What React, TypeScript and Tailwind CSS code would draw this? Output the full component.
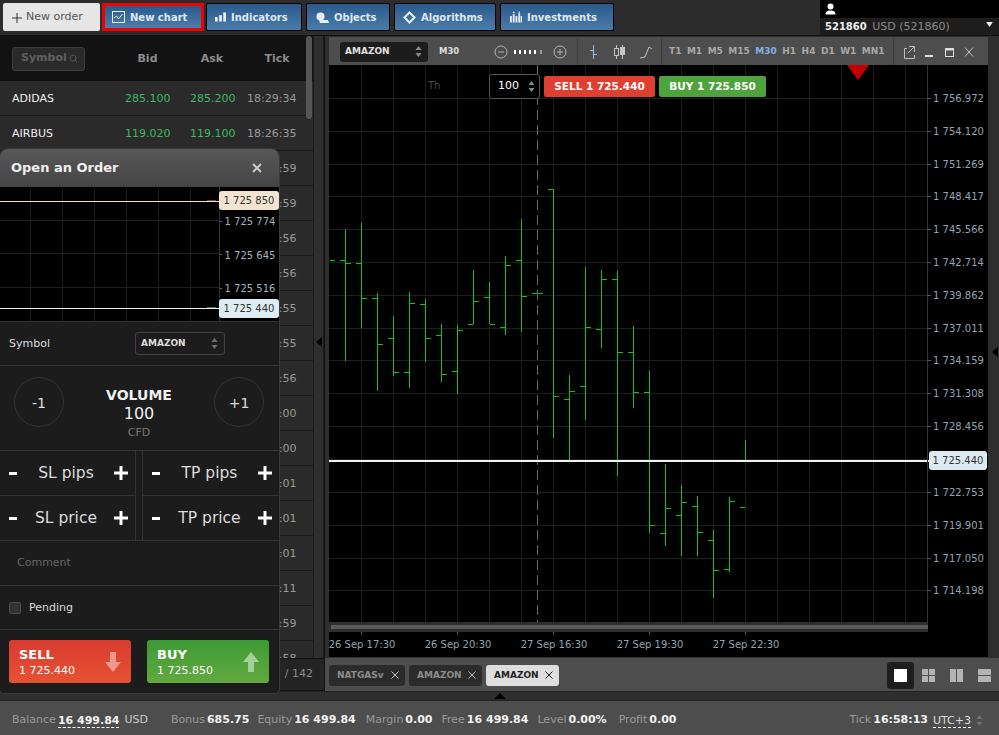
import { Search } from 'lucide-react';
import type { ReactNode } from 'react';

// x, high, low, open, close - in chart pixels
const bars: [number, number, number, number, number][] = [
  [329, 260, 260, 260, 260],
  [345, 229, 361, 260, 263],
  [361, 223, 328, 263, 298],
  [377, 293, 391, 298, 344],
  [393, 316, 376, 338, 372],
  [409, 292, 388, 372, 303],
  [425, 299, 362, 304, 338],
  [441, 324, 382, 335, 374],
  [457, 325, 394, 371, 330],
  [473, 270, 324, 324, 301],
  [489, 282, 324, 297, 324],
  [505, 256, 335, 327, 265],
  [521, 219, 332, 260, 296],
  [537, 293, 293, 293, 293],
  [553, 189, 438, 189, 396],
  [569, 375, 461, 399, 391],
  [585, 267, 420, 386, 327],
  [601, 270, 348, 329, 279],
  [617, 271, 476, 279, 352],
  [633, 326, 408, 352, 392],
  [649, 371, 533, 392, 525],
  [665, 464, 546, 533, 508],
  [681, 485, 556, 515, 502],
  [697, 496, 556, 506, 532],
  [713, 530, 598, 540, 570],
  [729, 497, 572, 569, 501],
  [745, 440, 461, 507, 460],
];

const priceLabels: [number, string][] = [
  [98, '1 756.972'],
  [131, '1 754.120'],
  [164, '1 751.269'],
  [196, '1 748.417'],
  [229, '1 745.566'],
  [262, '1 742.714'],
  [295, '1 739.862'],
  [328, '1 737.011'],
  [360, '1 734.159'],
  [393, '1 731.308'],
  [426, '1 728.456'],
  [492, '1 722.753'],
  [525, '1 719.901'],
  [558, '1 717.050'],
  [590, '1 714.198'],
];

const gridY = [98, 131, 164, 196, 229, 262, 295, 328, 360, 393, 426, 459, 492, 525, 558, 590];
const gridX = Array.from({ length: 18 }, (_, i) => 361 + i * 32);

const timeLabels: [number, string][] = [
  [361, '26 Sep 17:30'],
  [457, '26 Sep 20:30'],
  [553, '27 Sep 16:30'],
  [649, '27 Sep 19:30'],
  [745, '27 Sep 22:30'],
];

const rows = [
  ['ADIDAS', '285.100', '285.200', '18:29:34'],
  ['AIRBUS', '119.020', '119.100', '18:26:35'],
  ['ALCOA', '31.410', '31.440', '18:28:59'],
  ['ALLIANZ', '182.300', '182.400', '18:29:59'],
  ['AMAZON', '725.440', '725.850', '18:29:56'],
  ['APPLE', '171.050', '171.110', '18:29:56'],
  ['AT&T', '38.120', '38.150', '18:29:55'],
  ['AUDCAD', '0.98410', '0.98440', '18:29:55'],
  ['AUDJPY', '88.410', '88.450', '18:29:56'],
  ['AUDUSD', '0.78320', '0.78350', '18:30:00'],
  ['BAIDU', '246.500', '246.900', '18:30:00'],
  ['BARCLAYS', '197.200', '197.400', '18:30:01'],
  ['BAYER', '114.600', '114.800', '18:30:01'],
  ['BMW', '86.210', '86.290', '18:30:01'],
  ['BOEING', '251.300', '251.500', '18:28:11'],
  ['BP', '493.100', '493.400', '18:29:59'],
  ['BRENT', '57.810', '57.850', '18:29:58'],
];

const timeframes = ['T1', 'M1', 'M5', 'M15', 'M30', 'H1', 'H4', 'D1', 'W1', 'MN1'];

function Spinner({ className = 'text-[#8a8a8a]' }: { className?: string }) {
  return (
    <svg width="7" height="13" viewBox="0 0 7 13" className={`shrink-0 ${className}`}>
      <path d="M3.5 1 L6.5 5 H0.5 Z M3.5 12 L6.5 8 H0.5 Z" fill="currentColor" />
    </svg>
  );
}

function TopButton({ icon, label, className }: { icon: ReactNode; label: string; className: string }) {
  return (
    <button className={`flex h-[28px] items-center gap-[5px] rounded-[2px] border border-black bg-gradient-to-b from-[#2a5a8c] to-[#4b7dab] text-[10px] font-bold text-[#dfe8f1] ${className}`}>
      {icon}
      {label}
    </button>
  );
}

function TopBar() {
  return (
    <div className="flex h-[36px] shrink-0 border-b border-[#111] bg-[#2c2c2c]">
      <div className="flex flex-1 gap-[2px] pl-[3px] pt-[3px]">
        <button className="flex h-[28px] w-[97px] items-center gap-[4px] rounded-[2px] bg-[#e6e6e6] pl-[9px] text-[11px] text-[#555]">
          <svg width="10" height="10" viewBox="0 0 10 10" stroke="#333" className="mt-[1px]">
            <path d="M5 0 V10 M0 5 H10" />
          </svg>
          New order
        </button>
        <div className="h-[28px] w-[102px] border-[3px] border-[#f00000] bg-[#2d5f90]">
          <div className="flex h-full items-center gap-[5px] bg-gradient-to-b from-[#2a5a8c] to-[#4b7dab] pl-[7px] text-[10px] font-bold text-[#dfe8f1]">
            <svg width="13" height="12" viewBox="0 0 13 12" fill="none" stroke="#e8eef5">
              <rect x="0.5" y="0.5" width="12" height="11" />
              <path d="M2 7 L4.5 5 L6.5 8 L10.5 3" />
            </svg>
            New chart
          </div>
        </div>
        <div className="flex gap-[4px]">
          <TopButton
            className="w-[96px] pl-[8px]"
            label="Indicators"
            icon={
              <svg width="11" height="10" viewBox="0 0 12 10" fill="#e8eef5">
                <rect x="0" y="5" width="3" height="5" />
                <rect x="4.5" y="3" width="3" height="7" />
                <rect x="9" y="0" width="3" height="10" />
              </svg>
            }
          />
          <TopButton
            className="w-[84px] pl-[9px]"
            label="Objects"
            icon={
              <svg width="13" height="11" viewBox="0 0 13 11" fill="#e8eef5">
                <circle cx="4.5" cy="4.5" r="4" />
                <path d="M3 8 H12 L13 11 H4 Z" />
              </svg>
            }
          />
          <TopButton
            className="w-[102px] pl-[8px]"
            label="Algorithms"
            icon={
              <svg width="13" height="13" viewBox="0 0 13 13" fill="none" stroke="#e8eef5" strokeWidth="2">
                <path d="M6.5 1.5 L11.5 6.5 L6.5 11.5 L1.5 6.5 Z" />
              </svg>
            }
          />
          <TopButton
            className="w-[114px] pl-[9px]"
            label="Investments"
            icon={
              <svg width="12" height="12" viewBox="0 0 13 12" fill="#e8eef5">
                <rect x="0" y="5" width="2" height="7" />
                <rect x="3" y="3" width="2" height="9" />
                <rect x="6" y="5" width="2" height="7" />
                <rect x="9" y="2" width="2" height="10" />
                <rect x="11.5" y="5" width="1.5" height="7" />
                <circle cx="4" cy="1" r="1" />
                <circle cx="10" cy="0.8" r="0.8" />
              </svg>
            }
          />
        </div>
      </div>
      <div className="flex w-[179px] flex-col bg-black">
        <div className="flex h-[18px] items-center pl-[5px]">
          <svg width="11" height="12" viewBox="0 0 11 12" fill="#fff">
            <circle cx="5.5" cy="3.5" r="3" />
            <path d="M0.5 11.5 C0.5 8 3 7.5 5.5 7.5 C8 7.5 10.5 8 10.5 11.5 Z" />
          </svg>
        </div>
        <div className="flex h-[17px] items-center justify-between bg-[#1d1d1d] pl-[5px] pr-[6px] pt-[2px] text-[11px]">
          <span>
            <b className="text-[10px] text-[#eee]">521860</b> <span className="ml-[2px] text-[#8a8a8a]">USD (521860)</span>
          </span>
          <svg width="7" height="5" viewBox="0 0 8 6" fill="#eee" className="mb-[6px]">
            <path d="M0 0 H8 L4 6 Z" />
          </svg>
        </div>
      </div>
    </div>
  );
}

function SymbolList() {
  return (
    <div className="relative flex w-[324px] shrink-0 flex-col bg-[#232323] text-[11px]">
      <div className="flex min-h-0 flex-1">
        <div className="relative w-[313px] shrink-0 overflow-hidden">
          <div className="flex h-[45px] items-center bg-[#121212]">
            <div className="ml-[12px] flex h-[24px] w-[73px] items-center gap-[2px] rounded-[3px] border border-[#3d3d3d] bg-[#2a2a2a] pl-[8px] font-bold text-[#5f5f5f]">
              Symbol
              <Search size={9} />
            </div>
            <div className="flex-1" />
            <span className="w-[65px] pt-[1px] text-center font-bold text-[#8c8c8c]">Bid</span>
            <span className="w-[64px] pt-[1px] text-center font-bold text-[#8c8c8c]">Ask</span>
            <span className="w-[69px] pr-[3px] pt-[1px] text-center font-bold text-[#8c8c8c]">Tick</span>
          </div>
          {rows.map(([name, bid, ask, tick]) => (
            <div key={name} className="flex h-[35px] items-center border-b border-[#1a1a1a] bg-[#2a2a2a] pl-[12px] pt-[3px]">
              <span className="w-[113px] text-[#eee]">{name}</span>
              <span className="w-[65px] text-[#3fb85f]">{bid}</span>
              <span className="w-[57px] text-[#3fb85f]">{ask}</span>
              <span className="text-[#9a9a9a]">{tick}</span>
            </div>
          ))}
          <div className="absolute right-[1px] top-0 h-[83px] w-[6px] rounded-[3px] bg-[#555]" />
        </div>
        <div className="flex w-[11px] items-center justify-center border-x border-[#1a1a1a] bg-[#2e2e2e]">
          <svg width="6" height="10" viewBox="0 0 6 10" fill="#000" className="mb-[10px]">
            <path d="M6 0 V10 L0 5 Z" />
          </svg>
        </div>
      </div>
      <div className="flex h-[33px] shrink-0 items-center justify-end border-y border-[#111] bg-[#242424] pr-[11px] text-[#8a8a8a]">
        / 142
      </div>
    </div>
  );
}

function Toolbar() {
  return (
    <div className="flex h-[28px] w-[659px] shrink-0 items-center bg-[#4d4d4d] pt-[1px] text-[#b4b4b4]">
      <div className="ml-[11px] flex h-[20px] w-[88px] shrink-0 items-center justify-between rounded-[3px] bg-[#1c1c1c] pl-[5px] pr-[6px] text-[9px] font-bold text-[#e0e0e0]">
        AMAZON
        <Spinner />
      </div>
      <span className="ml-[11px] w-[20px] shrink-0 text-[8.5px] font-bold text-[#ddd]">M30</span>
      <svg width="82" height="14" viewBox="0 0 82 14" className="ml-[35px] shrink-0" fill="none" stroke="#b4b4b4">
        <circle cx="7" cy="7" r="6" />
        <path d="M4 7 H10" />
        <path d="M21 5 V9 M26 5 V9 M31 5 V9 M36 5 V9 M41 5 V9" stroke="#fff" strokeWidth="2" />
        <path d="M47 5 V9" stroke="#999" strokeWidth="2" />
        <circle cx="66" cy="7" r="6" />
        <path d="M63 7 H69 M66 4 V10" />
      </svg>
      <div className="ml-[1px] h-full w-px shrink-0 bg-[#3d3d3d]" />
      <svg width="83" height="16" viewBox="0 0 83 16" fill="none" className="shrink-0">
        <path d="M15.5 1 V15 M12 6.5 H15.5 M15.5 10.5 H19" stroke="#8fbbea" />
        <path d="M38.5 1 V4 M38.5 12 V15 M44.5 1 V3 M44.5 11 V15" stroke="#c4c4c4" />
        <rect x="36.5" y="4.5" width="4" height="7" stroke="#c4c4c4" />
        <rect x="42.5" y="3.5" width="4" height="7" stroke="#c4c4c4" fill="#c4c4c4" />
        <path d="M62 14 L67 13 L71 3 L74 5" stroke="#c4c4c4" />
      </svg>
      <div className="h-full w-px shrink-0 bg-[#3d3d3d]" />
      <div className="flex h-full w-[231px] shrink-0 items-center gap-[5.5px] pl-[7px] text-[9px] font-bold text-[#a8a8a8]">
        {timeframes.map((tf) => (
          <span key={tf} className={tf === 'M30' ? 'text-[#7fb1e6]' : ''}>
            {tf}
          </span>
        ))}
      </div>
      <div className="h-full w-px shrink-0 bg-[#3d3d3d]" />
      <svg width="94" height="14" viewBox="0 0 94 14" fill="none" stroke="#bdbdbd" className="shrink-0">
        <path d="M13 3.5 H10.5 V13.5 H20.5 V10 M15 1.5 H20.5 V7 M20.5 1.5 L14 8" />
        <path d="M31 11 H39" strokeWidth="2" stroke="#ddd" />
        <rect x="51.5" y="3.5" width="8" height="8" stroke="#ddd" />
        <path d="M51 4.5 H60" strokeWidth="2" stroke="#ddd" />
        <path d="M71 2.5 L79 11.5 M79 2.5 L71 11.5" />
      </svg>
    </div>
  );
}

function Chart() {
  return (
    <div className="relative h-[593px] w-[670px] shrink-0 bg-[#2e2e2e]">
      <svg width="659" height="593" viewBox="329 65 659 593" className="block bg-black" shapeRendering="crispEdges">
        {gridX.map((x) => (
          <line key={x} x1={x + 0.5} x2={x + 0.5} y1="65" y2="622" stroke="#1e1e1e" />
        ))}
        {gridY.map((y) => (
          <line key={y} x1="329" x2="927" y1={y + 0.5} y2={y + 0.5} stroke="#1e1e1e" />
        ))}
        <line x1="537.5" x2="537.5" y1="65" y2="622" stroke="#6a6a6a" strokeDasharray="10 5" />
        {bars.map(([x, high, low, open, close]) => (
          <g key={x} stroke="#16c116">
            <line x1={x + 0.5} x2={x + 0.5} y1={high} y2={low} />
            <line x1={x - 5} x2={x} y1={open + 0.5} y2={open + 0.5} />
            <line x1={x + 1} x2={x + 6} y1={close + 0.5} y2={close + 0.5} />
          </g>
        ))}
        <line x1="329" x2="930" y1="461" y2="461" stroke="#eef4f4" strokeWidth="2" />
        <line x1="927.5" x2="927.5" y1="65" y2="632" stroke="#333" />
        <rect x="329" y="622" width="599" height="10" fill="#2f2f2f" />
        <rect x="331" y="625" width="597" height="4" fill="#5a5a5a" />
        {priceLabels.map(([y]) => (
          <line key={y} x1="927" x2="931" y1={y + 0.5} y2={y + 0.5} stroke="#555" />
        ))}
        {timeLabels.map(([x]) => (
          <line key={x} x1={x + 0.5} x2={x + 0.5} y1="632" y2="635" stroke="#555" />
        ))}
        <g shapeRendering="auto" fontFamily="'DejaVu Sans', sans-serif" fontSize="10" fill="#93a3b3">
          {priceLabels.map(([y, label]) => (
            <text key={y} x="933" y={y + 4}>
              {label}
            </text>
          ))}
          {timeLabels.map(([x, label]) => (
            <text key={x} x={x + 1} y="648" textAnchor="middle">
              {label}
            </text>
          ))}
          <text x="428" y="89" fill="#4a4a4a">
            Th
          </text>
          <path d="M847 65 H869 L858 80 Z" fill="#c40000" />
        </g>
        <rect x="329" y="657" width="659" height="1" fill="#333" />
      </svg>
      <div className="absolute right-[1px] top-[282px]">
        <svg width="6" height="10" viewBox="0 0 6 10" fill="#000">
          <path d="M6 0 V10 L0 5 Z" />
        </svg>
      </div>
      {/* price tag on the live line */}
      <div className="absolute left-[600px] top-[386px] flex h-[19px] w-[58px] items-center justify-center rounded-[3px] bg-[#dcebf2] text-[10px] text-[#333]">
        1 725.440
      </div>
      {/* quick trade strip */}
      <div className="absolute left-[160px] top-[9px] flex items-center gap-[4px] text-[10.5px] font-bold text-white">
        <div className="flex h-[25px] w-[51px] items-center justify-between rounded-[3px] border border-[#555] bg-black pl-[8px] pr-[4px] text-[11px] font-normal">
          100
          <Spinner />
        </div>
        <div className="flex h-[21px] w-[111px] items-center justify-center rounded-[2px] bg-[#dd3f30]">SELL 1 725.440</div>
        <div className="flex h-[21px] w-[107px] items-center justify-center rounded-[2px] bg-[#4ea33c]">BUY 1 725.850</div>
      </div>
    </div>
  );
}

function TabClose({ className }: { className: string }) {
  return (
    <svg width="8" height="8" viewBox="0 0 8 8" fill="none" stroke="currentColor" className={className}>
      <path d="M0.5 0.5 L7.5 7.5 M7.5 0.5 L0.5 7.5" />
    </svg>
  );
}

function ChartTab({ label, active, className }: { label: string; active?: boolean; className: string }) {
  return (
    <div
      className={`flex h-[21px] items-center justify-between rounded-[3px] pl-[8px] pr-[6px] text-[9px] font-bold ${className} ${
        active ? 'bg-[#dedede] text-[#222]' : 'bg-[#2b2b2b] text-[#8c8c8c]'
      }`}
    >
      <span className="pt-[1px]">{label}</span>
      <TabClose className={active ? 'text-[#222]' : 'text-[#c4c4c4]'} />
    </div>
  );
}

function TabsRow() {
  return (
    <div className="flex h-[33px] items-center justify-between bg-[#4d4d4d] pl-[4px] pr-[8px] pt-[1px]">
      <div className="flex gap-[4px]">
        <ChartTab label="NATGASv" className="w-[76px]" />
        <ChartTab label="AMAZON" className="w-[73px]" />
        <ChartTab label="AMAZON" className="w-[73px]" active />
      </div>
      <div className="flex items-center gap-[15px]">
        <div className="flex h-[27px] w-[27px] items-center justify-center rounded-[3px] bg-[#1e1e1e]">
          <div className="h-[13px] w-[13px] bg-white" />
        </div>
        <svg width="13" height="13" viewBox="0 0 13 13" fill="#b4b4b4" className="-ml-[7px]">
          <rect width="6" height="6" />
          <rect x="7" width="6" height="6" />
          <rect y="7" width="6" height="6" />
          <rect x="7" y="7" width="6" height="6" />
        </svg>
        <svg width="13" height="13" viewBox="0 0 13 13" fill="#b4b4b4">
          <rect width="6" height="13" />
          <rect x="7" width="6" height="13" />
        </svg>
        <svg width="13" height="13" viewBox="0 0 13 13" fill="#b4b4b4">
          <rect width="13" height="6" />
          <rect y="7" width="13" height="6" />
        </svg>
      </div>
    </div>
  );
}

function StepCell({ label }: { label: string }) {
  return (
    <div className="flex h-[45px] items-center justify-between border-b border-[#333] pl-[9px] pr-[7px] text-[15.5px] text-[#ddd]">
      <div className="h-[3px] w-[8px] bg-white" />
      <span className="pl-[1px] pt-[2px]">{label}</span>
      <svg width="14" height="14" viewBox="0 0 14 14" fill="#fff">
        <path d="M5.5 0 H8.5 V5.5 H14 V8.5 H8.5 V14 H5.5 V8.5 H0 V5.5 H5.5 Z" />
      </svg>
    </div>
  );
}

function OrderDialog() {
  return (
    <div className="absolute left-0 top-[149px] h-[544px] w-[279px] overflow-hidden rounded-t-[8px] rounded-b-[4px] bg-[#1c1c1c] text-[11px] text-[#ddd] shadow-[0_0_0_1px_#3a3a3a]">
      <div className="flex h-[38px] items-center justify-between bg-gradient-to-b from-[#585858] to-[#444] pl-[11px] pr-[17px]">
        <span className="text-[13px] font-bold text-[#f0f0f0]">Open an Order</span>
        <svg width="10" height="10" viewBox="0 0 10 10" fill="none" stroke="#c8c8c8" strokeWidth="2">
          <path d="M1 1 L9 9 M9 1 L1 9" />
        </svg>
      </div>
      <div className="relative h-[134px] bg-black">
        <svg width="279" height="134" viewBox="0 187 279 134" className="block" shapeRendering="crispEdges">
          {[30, 62, 94, 126, 158, 190].map((x) => (
            <line key={x} x1={x + 0.5} x2={x + 0.5} y1="187" y2="321" stroke="#1e1e1e" />
          ))}
          {[220, 253, 287].map((y) => (
            <g key={y}>
              <line x1="0" x2="219" y1={y + 0.5} y2={y + 0.5} stroke="#1e1e1e" />
              <line x1="219" x2="222" y1={y + 1.5} y2={y + 1.5} stroke="#666" />
            </g>
          ))}
          <line x1="219.5" x2="219.5" y1="187" y2="321" stroke="#333" />
          <line x1="0" x2="220" y1="201.5" y2="201.5" stroke="#f3e4d2" />
          <line x1="0" x2="220" y1="308.5" y2="308.5" stroke="#e6f2f6" />
          <line x1="207" x2="216" y1="200.5" y2="200.5" stroke="#8a3a2a" />
          <line x1="207" x2="216" y1="307.5" y2="307.5" stroke="#3a7a2a" />
          <g shapeRendering="auto" fontFamily="'DejaVu Sans', sans-serif" fontSize="10" fill="#a4b0bc">
            <text x="224.5" y="225">1 725 774</text>
            <text x="224.5" y="259">1 725 645</text>
            <text x="224.5" y="292">1 725 516</text>
          </g>
        </svg>
        <div className="absolute right-0 top-[4px] flex h-[19px] w-[60px] items-center justify-center rounded-[3px] bg-[#f3e4d2] text-[10px] text-[#333]">
          1 725 850
        </div>
        <div className="absolute right-0 top-[112px] flex h-[19px] w-[60px] items-center justify-center rounded-[3px] bg-[#deedf4] text-[10px] text-[#333]">
          1 725 440
        </div>
      </div>
      <div className="flex h-[45px] items-center border-y border-[#333] pl-[9px]">
        <span className="w-[126px] pt-[1px]">Symbol</span>
        <div className="flex h-[23px] w-[90px] items-center justify-between rounded-[3px] border border-[#444] pl-[5px] pr-[6px] text-[9px] font-bold">
          AMAZON
          <Spinner className="text-[#6e6e6e]" />
        </div>
      </div>
      <div className="flex h-[85px] items-start border-b border-[#333] pt-[11px]">
        <div className="ml-[14px] flex h-[50px] w-[50px] shrink-0 items-center justify-center rounded-full border border-[#333] pt-[2px] text-[14px]">-1</div>
        <div className="flex w-[150px] flex-col items-center pt-[10px]">
          <span className="text-[14px] font-bold leading-[16px] text-[#f0f0f0]">VOLUME</span>
          <span className="text-[16px] leading-[22px] text-[#eee]">100</span>
          <span className="text-[11px] leading-[16px] text-[#777]">CFD</span>
        </div>
        <div className="flex h-[50px] w-[50px] shrink-0 items-center justify-center rounded-full border border-[#333] pt-[2px] text-[14px]">+1</div>
      </div>
      <div className="flex h-[90px] justify-between border-b border-[#333]">
        <div className="w-[136px] border-r border-[#333]">
          <StepCell label="SL pips" />
          <StepCell label="SL price" />
        </div>
        <div className="w-[137px] border-l border-[#333]">
          <StepCell label="TP pips" />
          <StepCell label="TP price" />
        </div>
      </div>
      <div className="flex h-[45px] items-center border-b border-[#333] pl-[17px] pt-[1px] text-[#666]">Comment</div>
      <div className="flex h-[44px] items-center gap-[8px] border-b border-[#333] pl-[9px]">
        <div className="h-[12px] w-[12px] rounded-[2px] border border-[#4a4a4a] bg-[#333]" />
        <span className="pt-[1px]">Pending</span>
      </div>
      <div className="flex gap-[16px] pl-[9px] pt-[10px]">
        <button className="flex h-[43px] w-[122px] items-center justify-between rounded-[3px] bg-gradient-to-b from-[#d93a30] to-[#e65233] pl-[10px] pr-[10px] pt-[3px] text-left text-white">
          <span>
            <b className="block text-[13px] leading-[16px]">SELL</b>
            <span className="block text-[11px] leading-[16px]">1 725.440</span>
          </span>
          <svg width="16" height="20" viewBox="0 0 16 20" fill="#ef9b8c" className="-mt-[3px]">
            <path d="M5 0 H11 V10 H16 L8 20 L0 10 H5 Z" />
          </svg>
        </button>
        <button className="flex h-[43px] w-[122px] items-center justify-between rounded-[3px] bg-gradient-to-b from-[#3c9a36] to-[#62a93f] pl-[10px] pr-[10px] pt-[3px] text-left text-white">
          <span>
            <b className="block text-[13px] leading-[16px]">BUY</b>
            <span className="block text-[11px] leading-[16px]">1 725.850</span>
          </span>
          <svg width="16" height="20" viewBox="0 0 16 20" fill="#a5d09a" className="-mt-[3px]">
            <path d="M5 20 H11 V10 H16 L8 0 L0 10 H5 Z" />
          </svg>
        </button>
      </div>
    </div>
  );
}

function Stat({ label, value, className, underline }: { label: string; value: string; className?: string; underline?: boolean }) {
  return (
    <span className={`flex items-center gap-[2px] ${className ?? ''}`}>
      <span className="text-[#9a9a9a]">{label}</span>
      <b className={underline ? 'border-b border-dashed border-white leading-[13px] text-[#f2f2f2]' : 'text-[#f2f2f2]'}>{value}</b>
    </span>
  );
}

function Footer() {
  return (
    <div className="flex h-[34px] items-center bg-[#4d4d4d] pl-[12px] pr-[16px] pt-[5px] text-[11px]">
      <Stat label="Balance" value="16 499.84" underline />
      <span className="ml-[5px] text-[#ccc]">USD</span>
      <Stat label="Bonus" value="685.75" className="ml-[23px]" />
      <Stat label="Equity" value="16 499.84" className="ml-[8px]" />
      <Stat label="Margin" value="0.00" className="ml-[10px]" />
      <Stat label="Free" value="16 499.84" className="ml-[9px]" />
      <Stat label="Level" value="0.00%" className="ml-[9px]" />
      <Stat label="Profit" value="0.00" className="ml-[12px]" />
      <div className="flex-1" />
      <Stat label="Tick" value="16:58:13" />
      <span className="ml-[5px] border-b border-dashed border-white leading-[13px] text-[#ddd]">UTC+3</span>
      <Spinner className="ml-[5px] text-[#6e6e6e]" />
    </div>
  );
}

export default function App() {
  return (
    <div className="relative flex h-[735px] w-[999px] flex-col overflow-hidden bg-[#2c2c2c] font-['DejaVu_Sans',sans-serif]">
      <TopBar />
      <div className="flex h-[655px] shrink-0">
        <SymbolList />
        <div className="flex flex-1 flex-col overflow-hidden border-l border-[#111] bg-[#2e2e2e] pl-[4px]">
          <div className="h-[1px] shrink-0" />
          <Toolbar />
          <Chart />
          <div className="-ml-[4px] w-[674px]">
            <TabsRow />
          </div>
        </div>
      </div>
      <div className="flex h-[10px] shrink-0 items-center justify-center border-y border-[#222] bg-[#2e2e2e]">
        <svg width="12" height="6" viewBox="0 0 12 6" fill="#000">
          <path d="M6 0 L12 6 H0 Z" />
        </svg>
      </div>
      <Footer />
      <OrderDialog />
    </div>
  );
}
